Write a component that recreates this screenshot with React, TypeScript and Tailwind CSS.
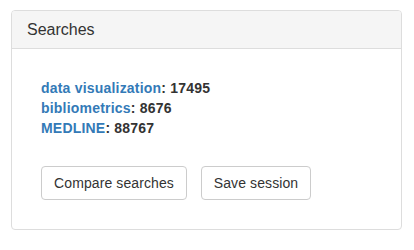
const searches = [
  { term: 'data visualization', count: 17495 },
  { term: 'bibliometrics', count: 8676 },
  { term: 'MEDLINE', count: 88767 },
]

export default function App() {
  return (
    <div className="min-h-[250px] bg-white pt-[10px] pl-[11px] font-['Liberation_Sans',Arial,sans-serif] text-[14px] text-[#333]">
      <div className="w-[391px] h-[220px] rounded border border-[#ddd] bg-white overflow-hidden">
        <div className="bg-[#f5f5f5] border-b border-[#ddd] px-[15px] py-[10px]">
          <h3 className="text-[16px] leading-[17px] text-[#333]">Searches</h3>
        </div>
        <div className="px-[29px] pt-[29px]">
          <div className="leading-[20px] font-bold tracking-[0.2px]">
            {searches.map((s) => (
              <div key={s.term}>
                <a href="#" className="text-[#337ab7] no-underline">{s.term}</a>: {s.count}
              </div>
            ))}
          </div>
          <div className="flex gap-[14px] mt-[28px]">
            <button className="h-[34px] w-[146px] border border-[#ccc] rounded bg-white text-[14px] leading-[20px] text-[#333] tracking-[0.1px]">
              Compare searches
            </button>
            <button className="h-[34px] w-[110px] border border-[#ccc] rounded bg-white text-[14px] leading-[20px] text-[#333] tracking-[0.1px]">
              Save session
            </button>
          </div>
        </div>
      </div>
    </div>
  )
}
